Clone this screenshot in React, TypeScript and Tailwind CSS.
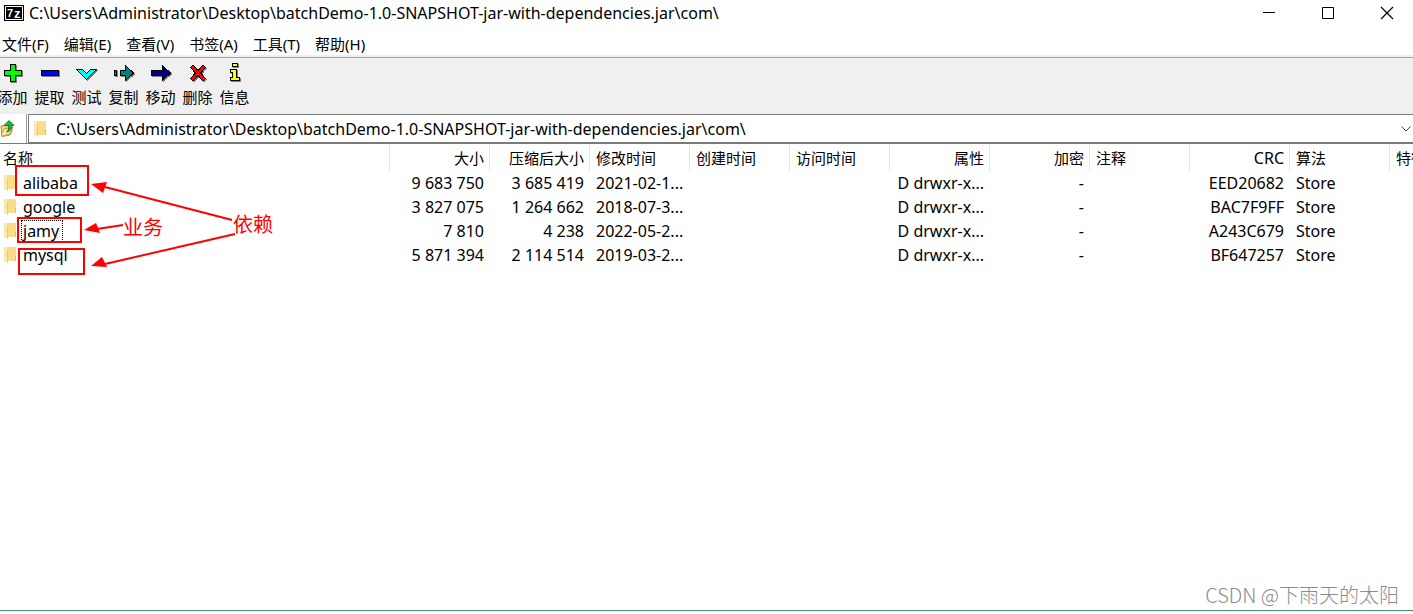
import React from 'react';

interface Column {
    label: string;
    width: string;
    align: string;
}

interface Entry {
    name: string;
    size: string;
    packed: string;
    modified: string;
    crc: string;
    focused?: boolean;
}

const PATH = 'C:\\Users\\Administrator\\Desktop\\batchDemo-1.0-SNAPSHOT-jar-with-dependencies.jar\\com\\';

const menus = ['文件(F)', '编辑(E)', '查看(V)', '书签(A)', '工具(T)', '帮助(H)'];

const columns: Column[] = [
    { label: '名称', width: 'w-[390px]', align: 'text-left' },
    { label: '大小', width: 'w-[100px]', align: 'text-right' },
    { label: '压缩后大小', width: 'w-[100px]', align: 'text-right' },
    { label: '修改时间', width: 'w-[100px]', align: 'text-left' },
    { label: '创建时间', width: 'w-[100px]', align: 'text-left' },
    { label: '访问时间', width: 'w-[100px]', align: 'text-left' },
    { label: '属性', width: 'w-[100px]', align: 'text-right' },
    { label: '加密', width: 'w-[100px]', align: 'text-right' },
    { label: '注释', width: 'w-[100px]', align: 'text-left' },
    { label: 'CRC', width: 'w-[100px]', align: 'text-right' },
    { label: '算法', width: 'w-[100px]', align: 'text-left' },
    { label: '特征', width: 'w-[100px]', align: 'text-left' },
];

const entries: Entry[] = [
    { name: 'alibaba', size: '9 683 750', packed: '3 685 419', modified: '2021-02-1...', crc: 'EED20682' },
    { name: 'google', size: '3 827 075', packed: '1 264 662', modified: '2018-07-3...', crc: 'BAC7F9FF' },
    { name: 'jamy', size: '7 810', packed: '4 238', modified: '2022-05-2...', crc: 'A243C679', focused: true },
    { name: 'mysql', size: '5 871 394', packed: '2 114 514', modified: '2019-03-2...', crc: 'BF647257' },
];

// every toolbar glyph has a grey drop shadow one pixel down and right
const Glyph: React.FC<{ d: string; fill: string }> = ({ d, fill }) => (
    <svg width="25" height="22" viewBox="0 0 25 22" shapeRendering="crispEdges" aria-hidden="true">
        <path d={d} fill="#808080" stroke="#808080" transform="translate(1 1)" />
        <path d={d} fill={fill} stroke="#000" />
    </svg>
);

const tools = [
    { label: '添加', fill: '#00ff00', d: 'M10.5 1.5h5v6h6v5h-6v6h-5v-6h-6v-5h6z' },
    { label: '提取', fill: '#0000ff', d: 'M4.5 7.5h17v5h-17z' },
    { label: '测试', fill: '#00ffff', d: 'M2.5 6.5h6l4 4 4-4h6l-10 10z' },
    { label: '复制', fill: '#008080', d: 'M3.5 7.5h2v5h-2zM9.5 7.5h5v-5l8 7.5-8 7.5v-5h-5z' },
    { label: '移动', fill: '#000080', d: 'M3.5 7.5h11v-5l8 7.5-8 7.5v-5h-11z' },
    { label: '删除', fill: '#ff0000', d: 'M5.5 4.5l2-2h1l4.5 5 4.5-5h1l2 2-5 5.5 5 5.5-2 2h-1l-4.5-5-4.5 5h-1l-2-2 5-5.5z' },
    { label: '信息', fill: '#ffff00', d: 'M10.5 .5h5v3h-5zM8.5 6.500h6v8h3v3h-9v-3h2v-5h-2z' },
];

const FolderIcon: React.FC = () => (
    <svg width="13" height="16" viewBox="0 0 13 16" className="shrink-0" aria-hidden="true">
        <path d="M3 0h9v7l-1 1v6H3z" fill="#fbdc88" />
        <path d="M11 8h1v6h-1z" fill="#eec15c" />
        <path d="M0 0h2l2 2v14l-4-2z" fill="#fbe7ad" />
        <path d="M3 3h1v13l-1-1z" fill="#f0cb70" />
    </svg>
);

const UpIcon: React.FC = () => (
    <svg width="14" height="17" viewBox="0 0 14 17" aria-hidden="true">
        <path d="M1 6l4-1 1 1 5-1 1 6-2 4-8 1.500z" fill="#f4d675" stroke="#b8912e" />
        <path d="M1 15l3-6 9-2-3 7-8 2z" fill="#fbe9a0" stroke="#c49c35" />
        <path d="M4 5.500L9 .5l5 5h-2.500c.5 3-1 6-5 6.500 2-1.500 2.500-4 2-6.500z" fill="#22b14c" stroke="#167a32" />
    </svg>
);

const TitleBar: React.FC = () => (
    <header className="flex h-[27px] items-center pb-px pl-1">
        <svg width="20" height="16" viewBox="0 0 20 16" className="shrink-0" role="img" aria-label="7-Zip">
            <path d="M0 0h20v16H0z" />
            <path d="M1.500 1.500h17v13h-17z" fill="none" stroke="#fff" />
            <text x="3" y="12" fill="#fff" fontSize="11" className="font-['Liberation_Sans',sans-serif] font-bold">7</text>
            <text x="10" y="13" fill="#fff" fontSize="13" className="font-['Liberation_Sans',sans-serif] font-bold">z</text>
        </svg>
        <h1 className="ml-[5px] flex-1 truncate text-base leading-6">{PATH}</h1>
        <div className="flex gap-[35px] pr-[14px]">
            <button aria-label="最小化" className="flex h-6 w-6 items-center justify-center">
                <svg width="14" height="14" viewBox="0 0 14 14"><path d="M1 6.500h12" stroke="#000" /></svg>
            </button>
            <button aria-label="最大化" className="flex h-6 w-6 items-center justify-center">
                <svg width="14" height="14" viewBox="0 0 14 14"><path d="M1.500 1.500h11v11h-11z" fill="none" stroke="#000" /></svg>
            </button>
            <button aria-label="关闭" className="flex h-6 w-6 items-center justify-center">
                <svg width="14" height="14" viewBox="0 0 14 14"><path d="M1 1l12 12M13 1L1 13" stroke="#000" strokeWidth="1.200" /></svg>
            </button>
        </div>
    </header>
);

const Toolbar: React.FC = () => (
    <div className="h-14 overflow-hidden bg-[#f0f0f0] pt-[5px]">
        <div className="-ml-1.5 flex">
            {tools.map(tool => (
                <button key={tool.label} className="flex w-[37px] flex-col items-center text-[15px] leading-6 whitespace-nowrap">
                    <Glyph d={tool.d} fill={tool.fill} />
                    {tool.label}
                </button>
            ))}
        </div>
    </div>
);

const AddressBar: React.FC = () => (
    <div className="flex h-[29px] bg-white">
        <button aria-label="向上" className="flex w-[27px] items-center border-r border-[#a0a0a0]">
            <UpIcon />
        </button>
        <div className="ml-px flex flex-1 items-center border border-r-0 border-[#7a7a7a] pl-[5px]">
            <FolderIcon />
            <input aria-label="路径" defaultValue={PATH} className="ml-[9px] flex-1 text-base leading-6 outline-none" />
            <button aria-label="展开路径" className="pr-px">
                <svg width="12" height="12" viewBox="0 0 12 12"><path d="M1.500 3.500L6 8l4.500-4.500" fill="none" stroke="#444" /></svg>
            </button>
        </div>
    </div>
);

const FileTable: React.FC = () => (
    <table className="w-[1490px] table-fixed border-separate border-spacing-0 text-base leading-6 whitespace-nowrap">
        <thead>
            <tr className="h-[27px]">
                {columns.map((col, i) => (
                    <th key={col.label} className={`${col.width} ${col.align} ${i === 0 ? 'pl-[3px]' : 'pl-1.5'} border-r border-[#e5e5e5] p-0 pr-[5px] font-normal ${col.label === 'CRC' ? '' : 'text-[15px]'}`}>
                        {col.label}
                    </th>
                ))}
            </tr>
        </thead>
        <tbody>
            {entries.map(entry => (
                <tr key={entry.name} className="h-6">
                    <td className="p-0 pl-1">
                        <div className="flex h-6 items-center gap-1">
                            <FolderIcon />
                            <span className={`h-[22px] border border-dotted pr-[3px] pl-px leading-5 ${entry.focused ? 'border-black' : 'border-transparent'}`}>
                                {entry.name}
                            </span>
                        </div>
                    </td>
                    <td className="p-0 pr-1.5 text-right">{entry.size}</td>
                    <td className="p-0 pr-1.5 text-right">{entry.packed}</td>
                    <td className="p-0 pl-1.5">{entry.modified}</td>
                    <td />
                    <td />
                    <td className="p-0 pr-1.5 text-right">D drwxr-x...</td>
                    <td className="p-0 pr-1.5 text-right">-</td>
                    <td />
                    <td className="p-0 pr-1.5 text-right">{entry.crc}</td>
                    <td className="p-0 pl-1.5">Store</td>
                    <td />
                </tr>
            ))}
        </tbody>
    </table>
);

// red marks drawn over the list
const Annotations: React.FC = () => (
    <svg width="300" height="140" viewBox="0 0 300 140" className="pointer-events-none absolute top-0 left-0">
        <g fill="none" stroke="#ff0000" strokeWidth="2">
            <rect x="16" y="22" width="72" height="29" />
            <rect x="18" y="74" width="63" height="24" />
            <rect x="19" y="105" width="65" height="25" />
            <path d="M105 43L232 76M97 85l26-4M105 120l130-30" />
        </g>
        <g fill="#ff0000">
            <path d="M91 40l16-2-4 11z" />
            <path d="M84 86l12-7 4 10z" />
            <path d="M91 122l11-9 5 10z" />
            <text x="123" y="91" fontSize="20">业务</text>
            <text x="233" y="88" fontSize="20">依赖</text>
        </g>
    </svg>
);

const App: React.FC = () => {
    return (
        <div className="flex min-h-screen flex-col overflow-hidden bg-white pb-[3px] font-['Noto_Sans','Noto_Sans_CJK_SC',sans-serif] text-black">
            <TitleBar />
            <nav className="flex h-[31px] items-center gap-[15px] border-b border-[#a0a0a0] pt-1 pl-0.5 text-[15px] leading-6 shadow-[inset_0_-2px_0_#f0f0f0]">
                {menus.map(menu => (
                    <button key={menu}>{menu}</button>
                ))}
            </nav>
            <Toolbar />
            <AddressBar />
            <main className="relative flex-1 overflow-hidden border-t border-[#7a7a7a]">
                <FileTable />
                <Annotations />
                <p className="absolute right-3.5 bottom-px font-['Noto_Sans_CJK_SC',sans-serif] text-xl font-light text-[#8c8c8c]">CSDN @下雨天的太阳</p>
            </main>
            <div className="h-px bg-[#3f9080]" />
        </div>
    );
};

export default App;
